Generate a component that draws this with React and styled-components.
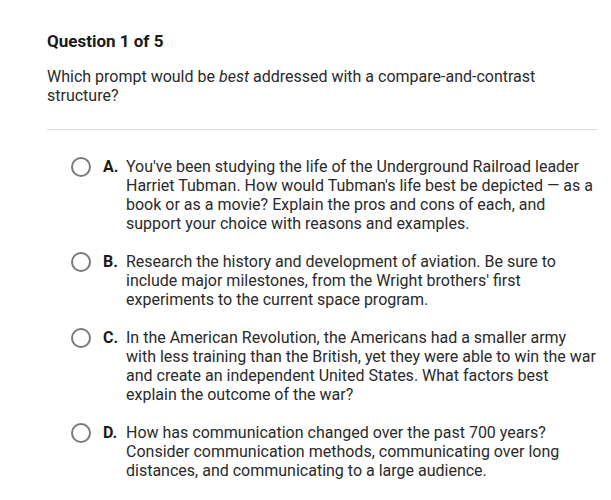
import styled, { createGlobalStyle } from 'styled-components'

const GlobalStyle = createGlobalStyle`
  body {
    margin: 0;
    background: #fff;
    font-family: Roboto, "Liberation Sans", sans-serif;
    color: #222;
  }
`

const options = [
  {
    letter: 'A.',
    text: "You've been studying the life of the Underground Railroad leader Harriet Tubman. How would Tubman's life best be depicted — as a book or as a movie? Explain the pros and cons of each, and support your choice with reasons and examples.",
  },
  {
    letter: 'B.',
    text: "Research the history and development of aviation. Be sure to include major milestones, from the Wright brothers' first experiments to the current space program.",
  },
  {
    letter: 'C.',
    text: 'In the American Revolution, the Americans had a smaller army with less training than the British, yet they were able to win the war and create an independent United States. What factors best explain the outcome of the war?',
  },
  {
    letter: 'D.',
    text: 'How has communication changed over the past 700 years? Consider communication methods, communicating over long distances, and communicating to a large audience.',
  },
]

const App = () => {
  return (
    <Wrapper>
      <GlobalStyle />
      <Title>Question 1 of 5</Title>
      <Prompt>
        Which prompt would be <em>best</em> addressed with a compare-and-contrast
        structure?
      </Prompt>
      <Divider />
      <Choices>
        {options.map((o) => (
          <Choice key={o.letter}>
            <Radio />
            <Letter>{o.letter}</Letter>
            <ChoiceText>{o.text}</ChoiceText>
          </Choice>
        ))}
      </Choices>
    </Wrapper>
  )
}

const Wrapper = styled.main`
  width: 550px;
  padding: 32px 0 0 47px;
  font-size: 16px;
  line-height: 19px;
`

const Title = styled.h1`
  margin: 0;
  font-size: 17px;
  line-height: 19px;
  font-weight: 700;
  color: #1a1a1a;
`

const Prompt = styled.p`
  margin: 16px 0 0;
  color: #2a2a2a;
  em {
    font-style: italic;
  }
`

const Divider = styled.hr`
  margin: 24px 0 0;
  border: 0;
  border-top: 1px solid #dcdcdc;
  height: 0;
`

const Choices = styled.div`
  display: flex;
  flex-direction: column;
  gap: 19px;
  padding: 27px 0 0 24px;
`

const Choice = styled.label`
  display: flex;
  align-items: flex-start;
  color: #2a2a2a;
`

const Radio = styled.span`
  flex: none;
  box-sizing: border-box;
  width: 20px;
  height: 20px;
  border: 2px solid #7a7a7a;
  border-radius: 50%;
  margin-right: 12px;
`

const Letter = styled.span`
  flex: none;
  width: 23px;
  font-weight: 700;
  color: #1a1a1a;
`

const ChoiceText = styled.span`
  flex: 1;
`

export default App
